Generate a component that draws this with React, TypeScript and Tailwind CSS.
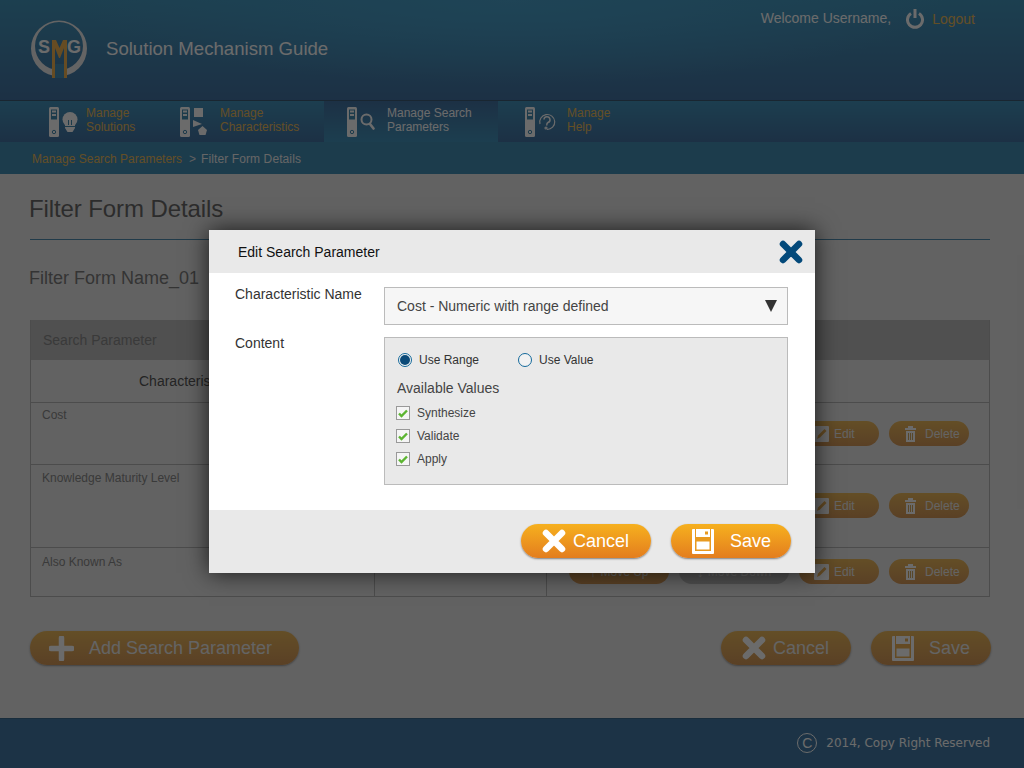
const FONT = "font-['Liberation_Sans',Arial,sans-serif]";
const HOLE = "#0c6a9c";

function Device() {
  return (
    <svg width="10" height="30" viewBox="0 0 10 30" className="shrink-0">
      <rect width="10" height="30" rx="1.5" fill="#fff" />
      <rect x="2" y="2.5" width="6" height="10" fill={HOLE} />
      <rect x="3" y="3.5" width="4" height="2" fill="#fff" />
      <rect x="3" y="7" width="4" height="2" fill="#fff" />
      <circle cx="5" cy="25" r="1.7" fill="none" stroke={HOLE} />
    </svg>
  );
}

function BulbIcon() {
  return (
    <svg width="16" height="20" viewBox="0 0 16 20">
      <circle cx="8" cy="7.5" r="7.5" fill="#fff" />
      <path d="M3 13h10v3l-2.5 4h-5L3 16z" fill="#fff" />
      <path d="M6.5 13V8M9.5 13V8" stroke={HOLE} />
      <path d="M2.5 14.5h11" stroke={HOLE} />
    </svg>
  );
}

function ShapesIcon() {
  return (
    <svg width="15" height="28" viewBox="0 0 15 28">
      <rect x="1" y="0" width="9" height="9" fill="#fff" />
      <path d="M0 12l9 4-9 3z" fill="#fff" />
      <path d="M9.5 18l4.5 4-1.5 5h-6L5 22z" fill="#fff" />
    </svg>
  );
}

function SearchIcon() {
  return (
    <svg width="15" height="17" viewBox="0 0 15 17" fill="none" stroke="#fff">
      <circle cx="6.5" cy="6.5" r="5" strokeWidth="2" />
      <path d="M10 11l3.5 4.5" strokeWidth="2.6" strokeLinecap="round" />
    </svg>
  );
}

function HelpIcon() {
  return (
    <svg width="18" height="18" viewBox="0 0 18 18" fill="none" stroke="#fff" strokeWidth="1.2">
      <path d="M2 11A7.5 7.5 0 1 1 9 16.5" />
      <path d="M6 6.5A3 3 0 1 1 10 9.5C9 10 8.7 11 8.7 12.5" strokeWidth="1.5" />
      <circle cx="8" cy="15" r="1" />
    </svg>
  );
}

function CrossIcon({ size, color }: { size: number; color: string }) {
  return (
    <svg width={size} height={size} viewBox="0 0 24 24">
      <path d="M4 4l16 16M20 4L4 20" stroke={color} strokeWidth="6.5" strokeLinecap="round" />
    </svg>
  );
}

function SaveIcon() {
  return (
    <svg width="22" height="25" viewBox="0 0 22 25" className="shrink-0">
      <rect width="22" height="25" rx="1" fill="#fff" />
      <path d="M3.5 0v8.5h15V0" fill="none" stroke="#e89a20" />
      <rect x="3" y="8" width="16" height="3" fill="#e89a20" />
      <rect x="3.75" y="11.75" width="14.5" height="9.5" fill="#fff" stroke="#e89a20" strokeWidth="1.5" />
      <rect x="13" y="2.5" width="3" height="3" fill="#e89a20" />
    </svg>
  );
}

function PencilIcon() {
  return (
    <svg width="15" height="16" viewBox="0 0 15 16" className="shrink-0">
      <rect width="15" height="16" rx="1" fill="#fff" />
      <path d="M3 13l1-3.5L10.5 3l2 2L6 11.5z" fill="#e89a20" />
    </svg>
  );
}

function TrashIcon() {
  return (
    <svg width="11" height="16" viewBox="0 0 11 16" className="shrink-0">
      <path d="M3 2V0h5v2h3v2H0V2z" fill="#fff" />
      <path d="M1 5h9v11H1z" fill="#fff" />
      <path d="M3.5 7v7M5.5 7v7M7.5 7v7" stroke="#c89030" />
    </svg>
  );
}

function Logo() {
  return (
    <svg width="58" height="58" viewBox="0 0 58 58" className="shrink-0">
      <path
        fillRule="evenodd"
        d="M1 28.5a28 28 0 1 0 56 0a28 28 0 1 0-56 0zM5 26a24 24 0 1 0 48 0a24 24 0 1 0-48 0z"
        fill="#e8e8e8"
      />
      <rect x="24" y="44" width="11" height="14" fill="#1170a4" />
      <path d="M22 20h4l3.5 8 3.5-8h4v38h-3V28l-4 10h-1l-4-10v30h-3z" fill="#f0a020" />
      <text x="8" y="33" fontSize="18" fontWeight="700" fill="#fff" fontFamily="Liberation Sans">S</text>
      <text x="37" y="33" fontSize="18" fontWeight="700" fill="#fff" fontFamily="Liberation Sans">G</text>
    </svg>
  );
}

function NavItem({ icon, lines, active, className, iconClass }: { icon: React.ReactNode; lines: string[]; active?: boolean; className: string; iconClass: string }) {
  return (
    <div className={`flex h-full items-center ${className} ${active ? "bg-gradient-to-b from-[#0c4a88] to-[#0a74a9]" : ""}`}>
      <Device />
      <div className={`flex items-center pl-[3px] ${iconClass}`}>{icon}</div>
      <div className={`pb-[3px] text-[12px] leading-[14px] ${active ? "text-white" : "text-[#e6a828]"}`}>
        {lines.map((l) => (
          <div key={l}>{l}</div>
        ))}
      </div>
    </div>
  );
}

function Pill({ icon, label, className }: { icon: React.ReactNode; label: string; className: string }) {
  return (
    <div className={`flex h-[25px] items-center rounded-full bg-gradient-to-b from-[#e8a52a] to-[#c97a28] text-[12px] text-[#e8e8e8] ${className}`}>
      {icon}
      <span>{label}</span>
    </div>
  );
}

function BigButton({ icon, label, className }: { icon: React.ReactNode; label: string; className: string }) {
  return (
    <div className={`flex h-[34px] items-center rounded-full bg-gradient-to-b text-[18px] shadow-[0_1px_2px_rgba(0,0,0,0.45)] ${className}`}>
      {icon}
      <span>{label}</span>
    </div>
  );
}

function RowActions({ className }: { className: string }) {
  return (
    <div className={`flex gap-[10px] pl-[22px] ${className}`}>
      <Pill className="w-[100px] justify-center gap-1" icon={<span className="text-[14px] leading-none">↑</span>} label="Move Up" />
      <Pill className="w-[110px] justify-center gap-1 !from-[#c0c0c0] !to-[#a8a8a8]" icon={<span className="text-[14px] leading-none">↓</span>} label="Move Down" />
      <Pill className="w-[80px] gap-[5px] pl-[15px]" icon={<PencilIcon />} label="Edit" />
      <Pill className="w-[80px] gap-[9px] pl-[16px]" icon={<TrashIcon />} label="Delete" />
    </div>
  );
}

function TableRow({ name, rowClass, nameClass, actionClass }: { name: string; rowClass: string; nameClass: string; actionClass: string }) {
  return (
    <div className={`grid grid-cols-[344px_172px_1fr] border-t border-[#a0a0a0] text-[12px] text-[#666] ${rowClass}`}>
      <div className={`border-r border-[#a0a0a0] pl-[11px] ${nameClass}`}>{name}</div>
      <div className="border-r border-[#a0a0a0]" />
      <RowActions className={actionClass} />
    </div>
  );
}

function Check({ label }: { label: string }) {
  return (
    <div className="flex h-[23px] items-center gap-[7px] text-[12px] text-[#444]">
      <svg width="14" height="14" viewBox="0 0 14 14" className="ml-[-1px]">
        <rect x="0.5" y="0.5" width="13" height="13" fill="#f5f5f5" stroke="#999" />
        <path d="M3 7.5l2.5 2.5L11 4.5" fill="none" stroke="#5cb531" strokeWidth="2.4" />
      </svg>
      <span>{label}</span>
    </div>
  );
}

function Radio({ on, label }: { on?: boolean; label: string }) {
  return (
    <div className="flex items-center gap-[7px] text-[12px] text-[#333]">
      <span className="flex h-[14px] w-[14px] items-center justify-center rounded-full border border-[#14699b] bg-[#f2f2f2]">
        {on && <span className="h-[10px] w-[10px] rounded-full bg-[#0b4a78]" />}
      </span>
      <span>{label}</span>
    </div>
  );
}

function EditModal() {
  const live = "from-[#f6b01e] to-[#e37d1e] text-white";
  return (
    <div className="ml-[209px] mt-[230px] h-[343px] w-[606px] bg-white shadow-[0_0_22px_rgba(0,0,0,0.75)]">
      <div className="flex h-[43px] items-center justify-between bg-[#e9e9e9] pl-[29px] pr-[12px] text-[14px] text-[#111]">
        <span className="pt-[1px]">Edit Search Parameter</span>
        <CrossIcon size={24} color="#03497a" />
      </div>
      <div className="h-[237px] pl-[26px] pt-[14px] text-[14px] text-[#333]">
        <div className="flex">
          <div className="w-[149px] leading-[14px]">Characteristic Name</div>
          <div className="flex h-[38px] w-[404px] items-center justify-between border border-[#bbb] bg-[#f6f6f6] pl-[12px] pr-[10px] text-[#444]">
            <span>Cost - Numeric with range defined</span>
            <span className="h-0 w-0 border-x-[6px] border-t-[12px] border-x-transparent border-t-[#333]" />
          </div>
        </div>
        <div className="mt-[12px] flex">
          <div className="mt-[-1px] h-[14px] w-[149px] leading-[14px]">Content</div>
          <div className="h-[148px] w-[404px] border border-[#bbb] bg-[#e9e9e9] pl-[12px] pt-[13px]">
            <div className="flex gap-[39px] pl-px">
              <Radio on label="Use Range" />
              <Radio label="Use Value" />
            </div>
            <div className="mt-[11px] text-[14px] leading-[16px] text-[#444]">Available Values</div>
            <div className="mt-[5px]">
              <Check label="Synthesize" />
              <Check label="Validate" />
              <Check label="Apply" />
            </div>
          </div>
        </div>
      </div>
      <div className="flex h-[63px] items-start justify-end gap-[20px] bg-[#e9e9e9] pr-[24px] pt-[14px]">
        <BigButton className={`w-[130px] gap-[7px] pl-[21px] ${live}`} icon={<CrossIcon size={24} color="#fff" />} label="Cancel" />
        <BigButton className={`w-[120px] gap-[16px] pl-[21px] ${live}`} icon={<SaveIcon />} label="Save" />
      </div>
    </div>
  );
}

export default function App() {
  const dim = "from-[#e8a52a] to-[#c97a28] text-[#e8e8e8]";
  return (
    <div className={`relative flex h-[768px] w-[1024px] flex-col overflow-hidden bg-[#e2e2e2] ${FONT}`}>
      <header className="relative flex h-[101px] shrink-0 justify-between border-b border-[#002b4d] bg-[radial-gradient(ellipse_at_50%_0%,#1385bd,transparent_60%),linear-gradient(to_bottom,#0c78aa,#0c4a88)] pl-[30px]">
        <div className="flex items-center gap-[18px] pb-[3px]">
          <Logo />
          <span className="pt-[1px] text-[18.6px] text-white">Solution Mechanism Guide</span>
        </div>
        <div className="flex items-start pr-[49px] pt-[9px] text-[14px]">
          <span className="mt-[-1px] text-white">Welcome Username,</span>
          <svg width="18" height="20" viewBox="0 0 18 20" fill="none" stroke="#fff" strokeWidth="3" className="ml-[15px]">
            <path d="M5 4.5a7.5 7.5 0 1 0 8 0" />
            <path d="M9 0v9" />
          </svg>
          <span className="ml-[8px] text-[#e6a828]">Logout</span>
        </div>
      </header>

      <nav className="flex h-[41px] shrink-0 bg-gradient-to-b from-[#0a74a9] to-[#0c4a88]">
        <NavItem className="w-[161px] pl-[49px]" iconClass="w-[27px]" icon={<BulbIcon />} lines={["Manage", "Solutions"]} />
        <NavItem className="w-[163px] pl-[19px]" iconClass="w-[30px]" icon={<ShapesIcon />} lines={["Manage", "Characteristics"]} />
        <NavItem active className="w-[174px] pl-[23px]" iconClass="w-[30px]" icon={<SearchIcon />} lines={["Manage Search", "Parameters"]} />
        <NavItem className="flex-1 pl-[27px]" iconClass="w-[32px]" icon={<HelpIcon />} lines={["Manage", "Help"]} />
      </nav>

      <div className="flex h-[32px] shrink-0 items-center bg-[#0a6ca0] pl-[32px] pt-[1px] text-[12px]">
        <span className="text-[#e6a828]">Manage Search Parameters</span>
        <span className="ml-[7px] text-[#ddd]">&gt;</span>
        <span className="ml-[5px] tracking-[0.1px] text-[#eee]">Filter Form Details</span>
      </div>

      <main className="flex-1 pl-[30px] pr-[34px]">
        <h1 className="ml-[-1px] pt-[21px] text-[24px] leading-[28px] tracking-[-0.1px] text-[#3c3c3c]">Filter Form Details</h1>
        <div className="mt-[16px] h-px bg-[#1a6a9a]" />
        <div className="ml-[-1px] mt-[27px] text-[18px] leading-[22px] text-[#555]">Filter Form Name_01</div>
        <div className="mt-[31px] border border-t-0 border-[#a0a0a0]">
          <div className="flex h-[40px] items-center bg-[#aaaaaa] pl-[12px] text-[14px] text-[#666]">Search Parameter</div>
          <div className="flex h-[42px] items-center pl-[108px] text-[14px] text-[#222]">Characteristic Name</div>
          <TableRow name="Cost" rowClass="h-[62px]" nameClass="pt-[3px]" actionClass="pt-[18px]" />
          <TableRow name="Knowledge Maturity Level" rowClass="h-[83px]" nameClass="pt-[4px]" actionClass="pt-[28px]" />
          <TableRow name="Also Known As" rowClass="h-[49px]" nameClass="pt-[5px]" actionClass="pt-[11px]" />
        </div>
        <div className="mt-[34px] flex justify-between">
          <BigButton className={`w-[269px] gap-[15px] pl-[19px] ${dim}`} icon={<svg width="25" height="25" viewBox="0 0 25 25"><path d="M12.5 2v21M2 12.5h21" stroke="#fff" strokeWidth="5.5" strokeLinecap="round" /></svg>} label="Add Search Parameter" />
          <div className="mr-[-1px] flex gap-[20px]">
            <BigButton className={`w-[130px] gap-[7px] pl-[21px] ${dim}`} icon={<CrossIcon size={24} color="#fff" />} label="Cancel" />
            <BigButton className={`w-[120px] gap-[15px] pl-[21px] ${dim}`} icon={<SaveIcon />} label="Save" />
          </div>
        </div>
      </main>

      <footer className="flex h-[50px] shrink-0 items-center justify-end gap-[9px] border-t border-[#00406e] bg-[#0c538b] pb-[1px] pr-[34px] text-[12px] text-white">
        <span className="flex h-[20px] w-[20px] items-center justify-center rounded-full border border-white text-[14px]">C</span>
        <span className="font-['DejaVu_Sans',sans-serif] text-[12px]">2014, Copy Right Reserved</span>
      </footer>

      {/* dimmed layer with the dialog */}
      <div className="absolute inset-0 bg-[#252525]/[0.68]">
        <EditModal />
      </div>
    </div>
  );
}
